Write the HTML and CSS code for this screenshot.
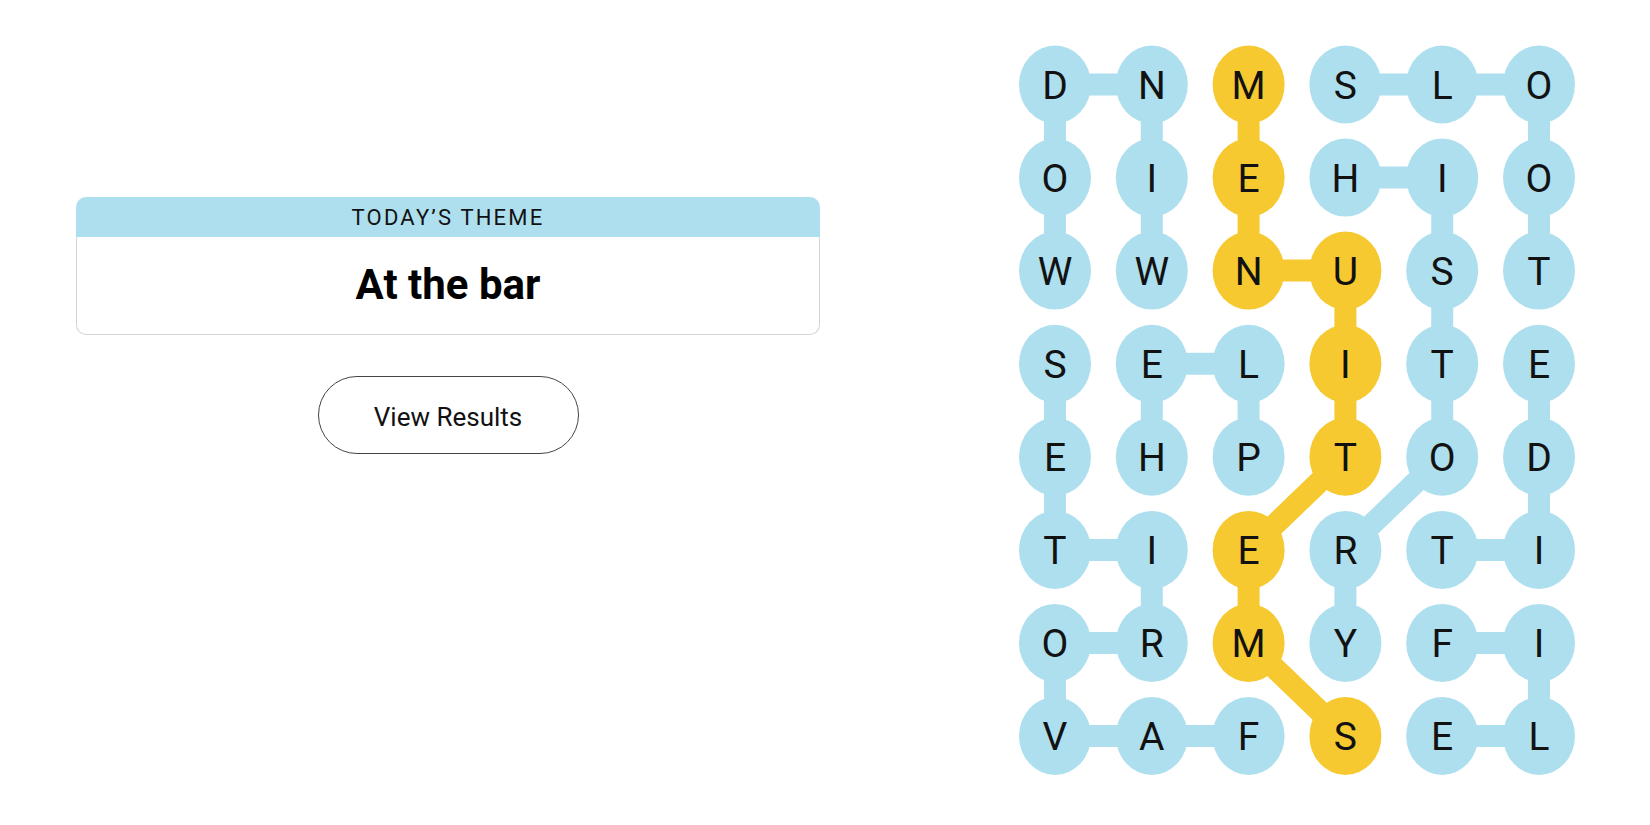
FILE: index.html
```html
<!DOCTYPE html>
<html lang="en">
<head>
<meta charset="utf-8">
<title>Strands</title>
<link rel="stylesheet" href="styles.css">
</head>
<body>
<main class="layout">
  <section class="info">
    <div class="theme-card">
      <div class="theme-head">TODAY’S THEME</div>
      <div class="theme-body">At the bar</div>
    </div>
    <button class="results-btn" type="button">View Results</button>
  </section>
  <section class="board">
    <svg class="board-svg" width="600" height="825" viewBox="0 0 600 825">
      <g class="links">
        <polyline points="151.8,270.6 151.8,84.5 55,84.5 55,270.6"/>
        <polyline points="539,270.6 539,84.5 345.4,84.5"/>
        <polyline points="345.4,177.6 442.2,177.6 442.2,456.8 345.4,549.9 345.4,642.9"/>
        <polyline points="539,363.7 539,549.9 442.2,549.9"/>
        <polyline points="442.2,642.9 539,642.9 539,736 442.2,736"/>
        <polyline points="151.8,456.8 151.8,363.7 248.6,363.7 248.6,456.8"/>
        <polyline points="248.6,736 55,736 55,642.9 151.8,642.9 151.8,549.9 55,549.9 55,363.7"/>
      </g>
      <g class="links span">
        <polyline points="248.6,84.5 248.6,270.6 345.4,270.6 345.4,456.8 248.6,549.9 248.6,642.9 345.4,736"/>
      </g>
      <g class="cells">
        <ellipse cx="55" cy="84.5" rx="36" ry="39"/><ellipse cx="151.8" cy="84.5" rx="36" ry="39"/><ellipse class="sp" cx="248.6" cy="84.5" rx="36" ry="39"/><ellipse cx="345.4" cy="84.5" rx="36" ry="39"/><ellipse cx="442.2" cy="84.5" rx="36" ry="39"/><ellipse cx="539" cy="84.5" rx="36" ry="39"/>
        <ellipse cx="55" cy="177.6" rx="36" ry="39"/><ellipse cx="151.8" cy="177.6" rx="36" ry="39"/><ellipse class="sp" cx="248.6" cy="177.6" rx="36" ry="39"/><ellipse cx="345.4" cy="177.6" rx="36" ry="39"/><ellipse cx="442.2" cy="177.6" rx="36" ry="39"/><ellipse cx="539" cy="177.6" rx="36" ry="39"/>
        <ellipse cx="55" cy="270.6" rx="36" ry="39"/><ellipse cx="151.8" cy="270.6" rx="36" ry="39"/><ellipse class="sp" cx="248.6" cy="270.6" rx="36" ry="39"/><ellipse class="sp" cx="345.4" cy="270.6" rx="36" ry="39"/><ellipse cx="442.2" cy="270.6" rx="36" ry="39"/><ellipse cx="539" cy="270.6" rx="36" ry="39"/>
        <ellipse cx="55" cy="363.7" rx="36" ry="39"/><ellipse cx="151.8" cy="363.7" rx="36" ry="39"/><ellipse cx="248.6" cy="363.7" rx="36" ry="39"/><ellipse class="sp" cx="345.4" cy="363.7" rx="36" ry="39"/><ellipse cx="442.2" cy="363.7" rx="36" ry="39"/><ellipse cx="539" cy="363.7" rx="36" ry="39"/>
        <ellipse cx="55" cy="456.8" rx="36" ry="39"/><ellipse cx="151.8" cy="456.8" rx="36" ry="39"/><ellipse cx="248.6" cy="456.8" rx="36" ry="39"/><ellipse class="sp" cx="345.4" cy="456.8" rx="36" ry="39"/><ellipse cx="442.2" cy="456.8" rx="36" ry="39"/><ellipse cx="539" cy="456.8" rx="36" ry="39"/>
        <ellipse cx="55" cy="549.9" rx="36" ry="39"/><ellipse cx="151.8" cy="549.9" rx="36" ry="39"/><ellipse class="sp" cx="248.6" cy="549.9" rx="36" ry="39"/><ellipse cx="345.4" cy="549.9" rx="36" ry="39"/><ellipse cx="442.2" cy="549.9" rx="36" ry="39"/><ellipse cx="539" cy="549.9" rx="36" ry="39"/>
        <ellipse cx="55" cy="642.9" rx="36" ry="39"/><ellipse cx="151.8" cy="642.9" rx="36" ry="39"/><ellipse class="sp" cx="248.6" cy="642.9" rx="36" ry="39"/><ellipse cx="345.4" cy="642.9" rx="36" ry="39"/><ellipse cx="442.2" cy="642.9" rx="36" ry="39"/><ellipse cx="539" cy="642.9" rx="36" ry="39"/>
        <ellipse cx="55" cy="736" rx="36" ry="39"/><ellipse cx="151.8" cy="736" rx="36" ry="39"/><ellipse cx="248.6" cy="736" rx="36" ry="39"/><ellipse class="sp" cx="345.4" cy="736" rx="36" ry="39"/><ellipse cx="442.2" cy="736" rx="36" ry="39"/><ellipse cx="539" cy="736" rx="36" ry="39"/>
      </g>
      <g class="letters">
        <text x="55" y="98.5">D</text><text x="151.8" y="98.5">N</text><text x="248.6" y="98.5">M</text><text x="345.4" y="98.5">S</text><text x="442.2" y="98.5">L</text><text x="539" y="98.5">O</text>
        <text x="55" y="191.6">O</text><text x="151.8" y="191.6">I</text><text x="248.6" y="191.6">E</text><text x="345.4" y="191.6">H</text><text x="442.2" y="191.6">I</text><text x="539" y="191.6">O</text>
        <text x="55" y="284.6">W</text><text x="151.8" y="284.6">W</text><text x="248.6" y="284.6">N</text><text x="345.4" y="284.6">U</text><text x="442.2" y="284.6">S</text><text x="539" y="284.6">T</text>
        <text x="55" y="377.7">S</text><text x="151.8" y="377.7">E</text><text x="248.6" y="377.7">L</text><text x="345.4" y="377.7">I</text><text x="442.2" y="377.7">T</text><text x="539" y="377.7">E</text>
        <text x="55" y="470.8">E</text><text x="151.8" y="470.8">H</text><text x="248.6" y="470.8">P</text><text x="345.4" y="470.8">T</text><text x="442.2" y="470.8">O</text><text x="539" y="470.8">D</text>
        <text x="55" y="563.9">T</text><text x="151.8" y="563.9">I</text><text x="248.6" y="563.9">E</text><text x="345.4" y="563.9">R</text><text x="442.2" y="563.9">T</text><text x="539" y="563.9">I</text>
        <text x="55" y="656.9">O</text><text x="151.8" y="656.9">R</text><text x="248.6" y="656.9">M</text><text x="345.4" y="656.9">Y</text><text x="442.2" y="656.9">F</text><text x="539" y="656.9">I</text>
        <text x="55" y="750">V</text><text x="151.8" y="750">A</text><text x="248.6" y="750">F</text><text x="345.4" y="750">S</text><text x="442.2" y="750">E</text><text x="539" y="750">L</text>
      </g>
    </svg>
  </section>
</main>
</body>
</html>
```
FILE: styles.css
```css
html, body {
  margin: 0;
  padding: 0;
  background: #ffffff;
}

body {
  font-family: Roboto, "Liberation Sans", Arial, sans-serif;
  color: #121212;
}

.layout {
  display: flex;
  width: 1650px;
  height: 825px;
  gap: 104px;
}

.info {
  width: 896px;
  box-sizing: border-box;
  padding: 197px 76px 0;
  display: flex;
  flex-direction: column;
  align-items: center;
}

.theme-card {
  width: 100%;
  display: flex;
  flex-direction: column;
}

.theme-head {
  height: 40px;
  background: #aedfee;
  border-radius: 10px 10px 0 0;
  display: flex;
  align-items: center;
  justify-content: center;
  font-size: 22px;
  letter-spacing: 2.2px;
  font-weight: 400;
  color: #121212;
}

.theme-body {
  height: 98px;
  box-sizing: border-box;
  border: 1px solid #d4d4d4;
  border-top: none;
  border-radius: 0 0 10px 10px;
  display: flex;
  align-items: center;
  justify-content: center;
  font-size: 42px;
  font-weight: 700;
  color: #000000;
  padding-bottom: 2px;
}

.results-btn {
  margin-top: 41px;
  width: 261px;
  height: 78px;
  border: 1.5px solid #444444;
  border-radius: 39px;
  background: #ffffff;
  font-family: Roboto, "Liberation Sans", Arial, sans-serif;
  font-size: 26px;
  color: #121212;
  padding: 0;
  padding-top: 3px;
  cursor: pointer;
}

.board {
  width: 600px;
}

.board-svg {
  display: block;
}

.links polyline {
  fill: none;
  stroke: #aedfee;
  stroke-width: 22;
  stroke-linejoin: miter;
}

.links.span polyline {
  stroke: #f6c930;
}

.cells ellipse {
  fill: #aedfee;
}

.cells ellipse.sp {
  fill: #f6c930;
}

.letters text {
  font-family: Roboto, "Liberation Sans", Arial, sans-serif;
  font-size: 39px;
  fill: #121212;
  text-anchor: middle;
}
```
